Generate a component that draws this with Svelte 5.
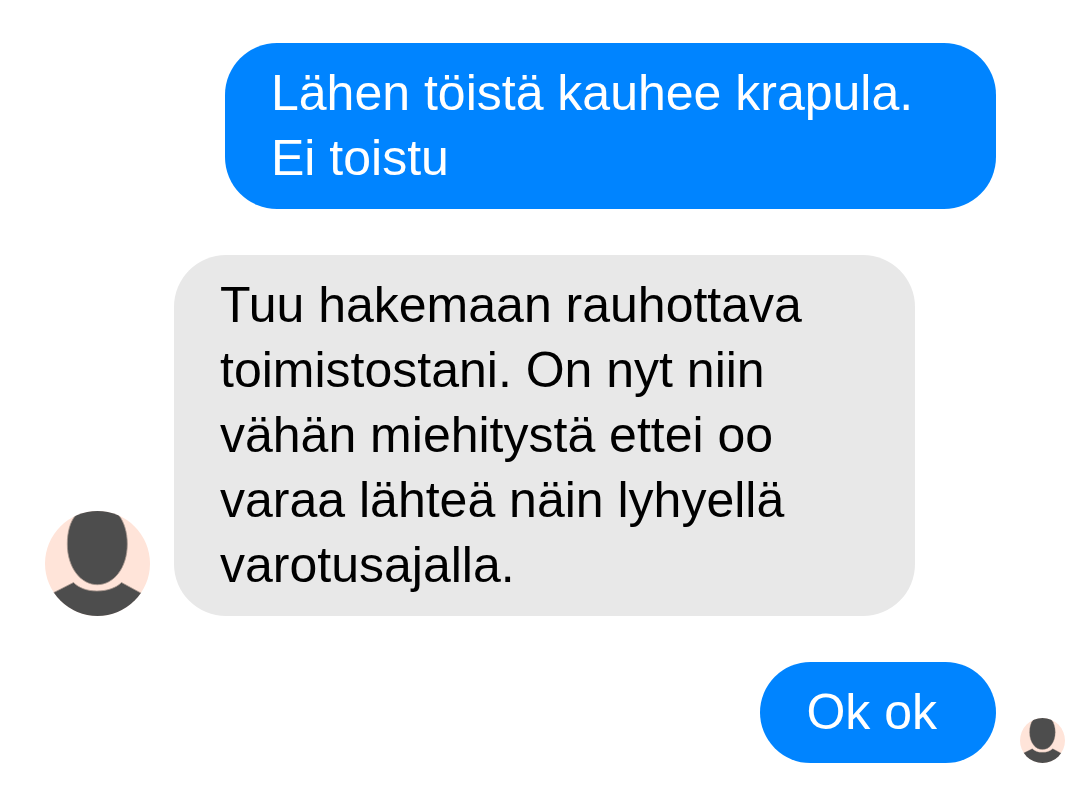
<!-- ChatThread.svelte -->
<script>
  const messages = [
    { id: 1, mine: true, text: 'Lähen töistä kauhee krapula. Ei toistu' },
    {
      id: 2,
      mine: false,
      text: 'Tuu hakemaan rauhottava toimistostani. On nyt niin vähän miehitystä ettei oo varaa lähteä näin lyhyellä varotusajalla.'
    },
    { id: 3, mine: true, text: 'Ok ok', seen: true }
  ];
</script>

{#snippet avatar()}
  <svg viewBox="0 0 105 105" aria-hidden="true">
    <rect width="105" height="105" fill="#ffe4d9" />
    <g fill="#4d4d4d" stroke="#a8988f" stroke-width="0.8">
      <path d="M52.300 -1C42 -1 34 0.500 30.500 4.500C25 11 22.300 21 22.300 33C22.300 57 36 73.700 52.300 73.700S82.300 57 82.300 33C82.300 21 79 11 74 4.500C70.500 0.500 62 -1 52.300 -1Z" />
      <path d="M-2 87L28.500 71.500C34 77 42 80 52 80S71 77 76.500 71.500L107 88V110H-2Z" />
    </g>
  </svg>
{/snippet}

<main class="thread">
  {#each messages as message (message.id)}
    <div class="row {message.mine ? 'mine' : 'theirs'}">
      {#if !message.mine}
        <div class="avatar">{@render avatar()}</div>
      {/if}
      <p class="bubble">{message.text}</p>
      {#if message.mine}
        <div class="receipt">
          {#if message.seen}{@render avatar()}{/if}
        </div>
      {/if}
    </div>
  {/each}
</main>

<style>
  :global(body) {
    margin: 0;
    background: #ffffff;
  }

  .thread {
    display: flex;
    flex-direction: column;
    gap: 46px;
    padding: 43px 15px 25px 45px;
    font-family: "Liberation Sans", Arial, sans-serif;
    font-size: 50px;
    line-height: 65px;
  }

  .row {
    display: flex;
    align-items: flex-end;
    gap: 24px;
  }

  .mine {
    justify-content: flex-end;
    padding-left: 180px;
  }

  .theirs {
    padding-right: 150px;
  }

  .bubble {
    margin: 0;
    padding: 18px 59px 18px 46px;
    border-radius: 52px;
  }

  .mine .bubble {
    background: #0084ff;
    color: #ffffff;
  }

  .theirs .bubble {
    flex: 1;
    background: #e8e8e8;
    color: #000000;
  }

  .avatar,
  .receipt {
    flex: none;
    border-radius: 50%;
    overflow: hidden;
  }

  .avatar {
    width: 105px;
    height: 105px;
  }

  .receipt {
    width: 45px;
    height: 45px;
  }

  svg {
    display: block;
    width: 100%;
    height: 100%;
  }
</style>
